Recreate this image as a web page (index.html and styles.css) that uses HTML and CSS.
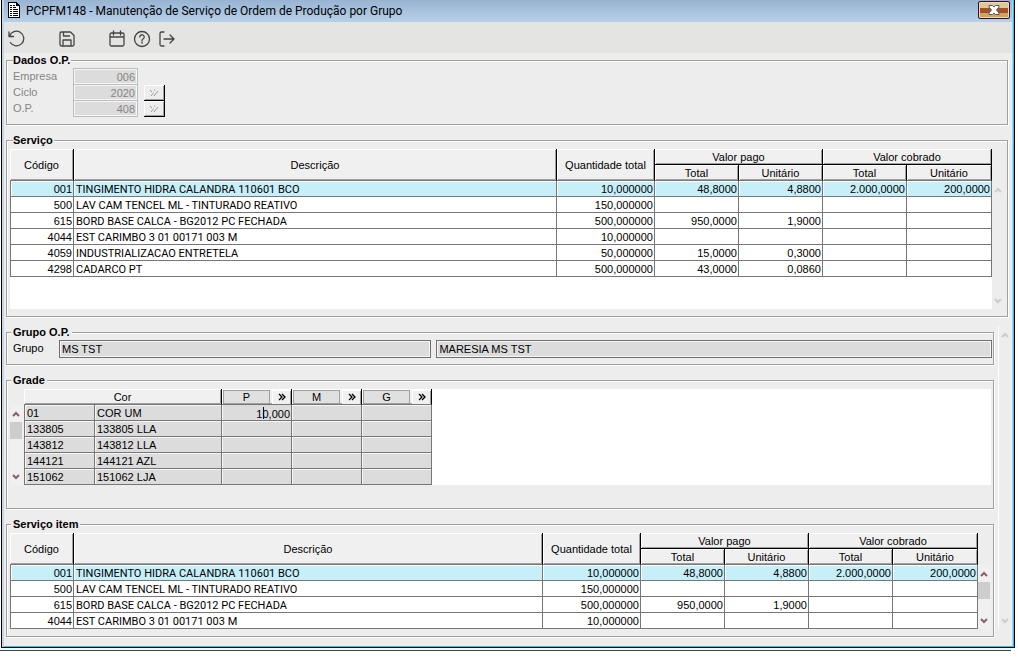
FILE: index.html
```html
<!DOCTYPE html>
<html lang="pt-BR">
<head>
    <meta charset="UTF-8">
    <meta name="viewport" content="width=device-width, initial-scale=1.0">
    <title>PCPFM148 - Manutenção de Serviço de Ordem de Produção por Grupo</title>
    <link rel="stylesheet" href="styles.css">
</head>
<body>
    <div class="window">
        <header class="titlebar">
            <svg class="app-icon" width="12" height="16" viewBox="0 0 12 16" shape-rendering="crispEdges">
                <path d="M0 0h8l4 4v12H0z" fill="#000"/>
                <path d="M1 1h7v3h3v11H1z" fill="#fff"/>
                <path d="M2 3h2v1H2zM5 3h2v1H5zM2 5h2v1H2zM5 5h3v1H5zM2 7h2v1H2zM5 7h5v1H5zM2 9h2v1H2zM5 9h5v1H5zM2 11h2v1H2zM5 11h5v1H5zM2 13h2v1H2zM5 13h5v1H5z" fill="#000"/>
            </svg>
            <h1>PCPFM148 - Manutenção de Serviço de Ordem de Produção por Grupo</h1>
            <button type="button" class="close" aria-label="Fechar">
                <svg width="12" height="10" viewBox="0 0 12 10">
                    <path d="M1 .5h3.500L6 2 7.500.5H11v1.500L8.500 5 11 8v1.500H7.500L6 8 4.500 9.500H1V8l2.500-3L1 2z" fill="#fff" stroke="#4a5672"/>
                </svg>
            </button>
        </header>

        <nav class="toolbar">
            <button type="button" aria-label="Desfazer">
                <svg viewBox="0 0 18 18"><path d="M1 2v4.500h4.500M1.500 6.300A7.300 7.300 0 1 1 2.300 12.500"/></svg>
            </button>
            <button type="button" class="save" aria-label="Salvar">
                <svg viewBox="0 0 18 18"><path d="M3.500 2h9L16 5.500v9a1.500 1.500 0 0 1-1.500 1.500h-11A1.500 1.500 0 0 1 2 14.500v-11A1.500 1.500 0 0 1 3.500 2zM5.500 2v4h6M5 16v-6h8v6"/></svg>
            </button>
            <button type="button" class="calendar" aria-label="Calendário">
                <svg viewBox="0 0 18 18"><path d="M3.500 3h11A1.500 1.500 0 0 1 16 4.500v10a1.500 1.500 0 0 1-1.500 1.500h-11A1.500 1.500 0 0 1 2 14.500v-10A1.500 1.500 0 0 1 3.500 3zM2 7h14M5.500 1v4M12.500 1v4"/></svg>
            </button>
            <button type="button" aria-label="Ajuda">
                <svg viewBox="0 0 18 18"><circle cx="9" cy="9" r="7.500"/><path d="M6.800 7a2.200 2.200 0 1 1 3.400 1.800C9.300 9.300 9 9.600 9 10.500M9 12v1.200"/></svg>
            </button>
            <button type="button" aria-label="Sair">
                <svg viewBox="0 0 18 18"><path d="M6 2H3.500A1.500 1.500 0 0 0 2 3.500v11A1.500 1.500 0 0 0 3.500 16H6M6 9h10M12 5l4 4-4 4"/></svg>
            </button>
        </nav>

        <main>
            <div class="top">
                <fieldset class="order">
                    <legend>Dados O.P.</legend>
                    <label for="empresa">Empresa</label>
                    <input type="text" id="empresa" value="006" disabled>
                    <span></span>
                    <label for="ciclo">Ciclo</label>
                    <input type="text" id="ciclo" value="2020" disabled>
                    <button type="button" class="lookup" aria-label="Buscar ciclo" disabled>
                        <svg width="10" height="8" viewBox="0 0 10 8"><path d="M1 1l2 2M5 1h1M2 7l2-2.500M5 7l4-5M4 4h1"/></svg>
                    </button>
                    <label for="op">O.P.</label>
                    <input type="text" id="op" value="408" disabled>
                    <button type="button" class="lookup" aria-label="Buscar O.P." disabled>
                        <svg width="10" height="8" viewBox="0 0 10 8"><path d="M1 1l2 2M5 1h1M2 7l2-2.500M5 7l4-5M4 4h1"/></svg>
                    </button>
                </fieldset>

                <fieldset>
                    <legend>Serviço</legend>
                    <div class="list list-tall">
                        <div class="sheet">
                            <table class="services">
                                <colgroup><col class="code"><col><col class="qty"><col class="val"><col class="val"><col class="val"><col class="val-last"></colgroup>
                                <thead>
                                    <tr><th rowspan="2">Código</th><th rowspan="2">Descrição</th><th rowspan="2">Quantidade total</th><th colspan="2" class="group">Valor pago</th><th colspan="2" class="group">Valor cobrado</th></tr>
                                    <tr><th>Total</th><th>Unitário</th><th>Total</th><th>Unitário</th></tr>
                                </thead>
                                <tbody>
                                    <tr class="selected"><td>001</td><td>TINGIMENTO HIDRA CALANDRA 110601 BCO</td><td>10,000000</td><td>48,8000</td><td>4,8800</td><td>2.000,0000</td><td>200,0000</td></tr>
                                    <tr><td>500</td><td>LAV CAM TENCEL ML - TINTURADO REATIVO</td><td>150,000000</td><td></td><td></td><td></td><td></td></tr>
                                    <tr><td>615</td><td>BORD BASE CALCA - BG2012 PC FECHADA</td><td>500,000000</td><td>950,0000</td><td>1,9000</td><td></td><td></td></tr>
                                    <tr><td>4044</td><td>EST CARIMBO 3 01 00171 003 M</td><td>10,000000</td><td></td><td></td><td></td><td></td></tr>
                                    <tr><td>4059</td><td>INDUSTRIALIZACAO ENTRETELA</td><td>50,000000</td><td>15,0000</td><td>0,3000</td><td></td><td></td></tr>
                                    <tr><td>4298</td><td>CADARCO PT</td><td>500,000000</td><td>43,0000</td><td>0,0860</td><td></td><td></td></tr>
                                </tbody>
                            </table>
                        </div>
                        <div class="scroll off">
                            <svg viewBox="0 0 8 6"><path d="M1 5l3-3 3 3"/></svg>
                            <svg viewBox="0 0 8 6"><path d="M1 1l3 3 3-3"/></svg>
                        </div>
                    </div>
                </fieldset>
            </div>

            <div class="bottom">
                <div class="panels">
                    <fieldset class="framed group-row">
                        <legend>Grupo O.P.</legend>
                        <div class="fields">
                            <label for="grupo">Grupo</label>
                            <input type="text" id="grupo" value="MS TST" readonly>
                            <input type="text" class="wide" aria-label="Descrição do grupo" value="MARESIA MS TST" readonly>
                        </div>
                    </fieldset>

                    <fieldset class="framed grade">
                        <legend>Grade</legend>
                        <div class="list">
                            <div class="scroll short">
                                <svg viewBox="0 0 8 6"><path d="M1 5l3-3 3 3"/></svg>
                                <span class="thumb"></span>
                                <svg viewBox="0 0 8 6"><path d="M1 1l3 3 3-3"/></svg>
                            </div>
                            <div class="sheet">
                                <table class="sizes">
                                    <colgroup><col class="size"><col class="color"><col class="size"><col class="size"><col class="size"></colgroup>
                                    <thead>
                                        <tr>
                                            <th colspan="2">Cor</th>
                                            <th><div class="size-head"><span>P</span><button type="button" aria-label="Detalhes P"><svg viewBox="0 0 8 8"><path d="M1 1l3 3-3 3M4 1l3 3-3 3"/></svg></button></div></th>
                                            <th><div class="size-head"><span>M</span><button type="button" aria-label="Detalhes M"><svg viewBox="0 0 8 8"><path d="M1 1l3 3-3 3M4 1l3 3-3 3"/></svg></button></div></th>
                                            <th><div class="size-head"><span>G</span><button type="button" aria-label="Detalhes G"><svg viewBox="0 0 8 8"><path d="M1 1l3 3-3 3M4 1l3 3-3 3"/></svg></button></div></th>
                                        </tr>
                                    </thead>
                                    <tbody>
                                        <tr><td>01</td><td>COR UM</td><td class="editing"><input type="text" aria-label="Quantidade P" value="10,000"><i class="caret"></i></td><td></td><td></td></tr>
                                        <tr><td>133805</td><td>133805 LLA</td><td></td><td></td><td></td></tr>
                                        <tr><td>143812</td><td>143812 LLA</td><td></td><td></td><td></td></tr>
                                        <tr><td>144121</td><td>144121 AZL</td><td></td><td></td><td></td></tr>
                                        <tr><td>151062</td><td>151062 LJA</td><td></td><td></td><td></td></tr>
                                    </tbody>
                                </table>
                            </div>
                        </div>
                    </fieldset>

                    <fieldset class="framed">
                        <legend>Serviço item</legend>
                        <div class="list">
                            <div class="sheet">
                                <table class="services">
                                    <colgroup><col class="code"><col><col class="qty"><col class="val"><col class="val"><col class="val"><col class="val-last"></colgroup>
                                    <thead>
                                        <tr><th rowspan="2">Código</th><th rowspan="2">Descrição</th><th rowspan="2">Quantidade total</th><th colspan="2" class="group">Valor pago</th><th colspan="2" class="group">Valor cobrado</th></tr>
                                        <tr><th>Total</th><th>Unitário</th><th>Total</th><th>Unitário</th></tr>
                                    </thead>
                                    <tbody>
                                        <tr class="selected"><td>001</td><td>TINGIMENTO HIDRA CALANDRA 110601 BCO</td><td>10,000000</td><td>48,8000</td><td>4,8800</td><td>2.000,0000</td><td>200,0000</td></tr>
                                        <tr><td>500</td><td>LAV CAM TENCEL ML - TINTURADO REATIVO</td><td>150,000000</td><td></td><td></td><td></td><td></td></tr>
                                        <tr><td>615</td><td>BORD BASE CALCA - BG2012 PC FECHADA</td><td>500,000000</td><td>950,0000</td><td>1,9000</td><td></td><td></td></tr>
                                        <tr><td>4044</td><td>EST CARIMBO 3 01 00171 003 M</td><td>10,000000</td><td></td><td></td><td></td><td></td></tr>
                                    </tbody>
                                </table>
                            </div>
                            <div class="scroll">
                                <svg viewBox="0 0 8 6"><path d="M1 5l3-3 3 3"/></svg>
                                <span class="thumb"></span>
                                <svg viewBox="0 0 8 6"><path d="M1 1l3 3 3-3"/></svg>
                            </div>
                        </div>
                    </fieldset>
                </div>
                <div class="scroll page-scroll off">
                    <svg viewBox="0 0 8 6"><path d="M1 5l3-3 3 3"/></svg>
                    <svg viewBox="0 0 8 6"><path d="M1 1l3 3 3-3"/></svg>
                </div>
            </div>
        </main>
    </div>
    <div class="back-edge"></div>
</body>
</html>
```
FILE: styles.css
```css
* {
    box-sizing: border-box;
}
body {
    margin: 0;
    background: #fff;
    color: #000;
    font-family: "Liberation Sans", Arial, sans-serif;
    font-size: 11px;
    line-height: 13px;
}
button, input {
    font: inherit;
    color: inherit;
    margin: 0;
    padding: 0;
    border-radius: 0;
}
svg {
    display: block;
    fill: none;
}

/* Window frame */
.window {
    margin: 0 3px 0 1px;
    border: 1px solid #000;
    border-top: 0;
    background: #ededed;
    box-shadow: inset 2px 0 0 #c3d5e6, inset -1px -1px 0 #28c4ec, inset -2px 0 0 #b4cfea;
    padding: 0 2px 1px;
}
.back-edge {
    height: 3px;
    margin-right: 7px;
    border-bottom: 1px solid #444;
    background: #eef8fc;
}
.titlebar {
    display: flex;
    align-items: center;
    height: 22px;
    padding: 0 2px 0 4px;
    background: linear-gradient(#98b4d2, #b8d1ea);
}
.titlebar h1 {
    flex: 1;
    margin: 0 0 0 6px;
    font: 12px/16px Roboto, "Noto Sans", sans-serif;
}
.app-icon {
    margin-bottom: 2px;
}
.close {
    display: flex;
    align-items: center;
    justify-content: center;
    width: 32px;
    height: 18px;
    margin-bottom: 2px;
    border: 1px solid #3c0a32;
    border-radius: 2px;
    background: linear-gradient(#e0c994 0 40%, #a5502a 40% 70%, #cfa55c 70%);
    box-shadow: inset 0 0 0 1px #ecd9b0;
}
.toolbar {
    display: flex;
    align-items: center;
    gap: 7px;
    height: 31px;
    padding: 3px 0 0 4px;
    background: #e4e4e2;
}
.toolbar button {
    width: 18px;
    height: 18px;
    border: 0;
    background: none;
}
.toolbar .save {
    margin-left: 25px;
}
.toolbar .calendar {
    margin-left: 25px;
}
.toolbar svg {
    stroke: #444;
    stroke-width: 1.3;
    stroke-linecap: round;
    stroke-linejoin: round;
}

/* Group boxes */
main {
    display: flex;
    flex-direction: column;
    gap: 9px;
    padding: 1px 0 9px 2px;
}
.top, .panels {
    display: flex;
    flex-direction: column;
    gap: 9px;
    min-width: 0;
}
.top {
    padding-right: 4px;
}
.bottom {
    display: flex;
    gap: 4px;
}
.panels {
    flex: 1;
}
fieldset {
    min-width: 0;
    margin: 0;
    padding: 2px 2px 7px 3px;
    border: 1px solid #a0a0a0;
    box-shadow: 1px 1px 0 #fff, inset 1px 1px 0 #fff;
}
legend {
    margin-left: 3px;
    padding: 0 1px 0 0;
    font-weight: bold;
    background: #ededed;
}
.framed legend {
    margin-left: 1px;
    padding: 0 2px;
}
.order {
    display: grid;
    grid-template-columns: 60px 65px 22px;
    grid-auto-rows: 16px;
    padding: 1px 6px 8px;
    color: #858585;
}
.order legend {
    margin-left: 0;
    color: #000;
}
.order label {
    padding-top: 2px;
}
.order input {
    height: 17px;
    width: 65px;
    padding: 1px 2px 0;
    border: 1px solid #bdbdbd;
    background: #dcdcdc;
    box-shadow: inset 0 0 0 1px #f6f6f6;
    text-align: right;
}
.lookup {
    display: flex;
    align-items: center;
    justify-content: center;
    width: 21px;
    height: 16px;
    margin: 1px 0 0 6px;
    border: solid #000;
    border-width: 0 1px 1px 0;
    background: #ededed;
    box-shadow: inset 1px 1px 0 #fff, inset -1px -1px 0 #a0a0a0;
}
.lookup svg {
    stroke: #999;
}
.fields {
    display: flex;
    gap: 5px;
}
.group-row {
    padding: 1px 1px 6px 3px;
}
.fields label {
    width: 44px;
    padding-left: 3px;
    line-height: 16px;
}
.fields input {
    flex: 2;
    min-width: 0;
    height: 18px;
    padding: 0 2px;
    border: 1px solid #707070;
    background: #dcdcdc;
    box-shadow: inset 0 0 0 1px #f6f6f6;
}
.fields .wide {
    flex: 3;
}
.grade {
    padding-bottom: 23px;
}

/* Tables */
.list {
    display: flex;
}
.list-tall {
    min-height: 160px;
}
.sheet {
    flex: 1;
    min-width: 0;
    background: #fff;
}
table {
    table-layout: fixed;
    border-collapse: separate;
    border-spacing: 0;
}
.services {
    width: 100%;
}
.code {
    width: 64px;
}
.qty {
    width: 98px;
}
.val {
    width: 84px;
}
.val-last {
    width: 85px;
}
th, td {
    height: 16px;
    border: solid #777;
    border-width: 0 1px 1px 0;
    white-space: nowrap;
    overflow: hidden;
}
th {
    padding: 1px 0 0;
    line-height: 14px;
    font-weight: normal;
    background: #f0f0f0;
    border-right-color: #000;
    box-shadow: inset 1px 1px 0 #fff, inset -1px -1px 0 #a0a0a0;
}
td {
    padding: 2px 1px 0 2px;
    line-height: 13px;
}
.group {
    border-bottom-color: #000;
}
td:first-child {
    border-left-width: 1px;
}
.services td {
    text-align: right;
}
.services td:nth-child(2) {
    font-family: Roboto, "Liberation Sans", sans-serif;
    text-align: left;
}
.selected td {
    background: #c6effa;
    box-shadow: inset 1px 1px 0 #fff;
}
.sizes {
    width: 408px;
}
.size {
    width: 70px;
}
.sizes .size:first-child {
    width: 71px;
}
.color {
    width: 127px;
}
.sizes td {
    background: #dcdcdc;
    box-shadow: inset 1px 1px 0 #f6f6f6;
}
.sizes th {
    padding: 0;
}
.size-head {
    display: flex;
    gap: 2px;
    height: 15px;
    padding: 1px 0 0 1px;
}
.size-head span {
    flex: 1;
    line-height: 13px;
    border: 1px solid #a0a0a0;
    background: #e0e0e0;
}
.size-head button {
    display: flex;
    align-items: center;
    justify-content: center;
    width: 19px;
    border: 0;
    background: #f0f0f0;
    box-shadow: inset 1px 1px 0 #fff, inset -1px 0 0 #a0a0a0;
}
.size-head svg {
    width: 8px;
    stroke: #000;
    stroke-width: 1.3;
}
.sizes .editing {
    position: relative;
    padding: 0;
    box-shadow: inset 1px 0 0 #f6f6f6;
}
.editing input {
    display: block;
    width: 100%;
    height: 15px;
    padding: 2px 1px 0;
    border: 0;
    background: none;
    text-align: right;
}
.caret {
    position: absolute;
    top: 2px;
    right: 27px;
    width: 1px;
    height: 12px;
    background: #000060;
}

/* Scroll bars */
.scroll {
    display: flex;
    flex-direction: column;
    justify-content: space-between;
    align-items: center;
    width: 13px;
    margin-top: 32px;
    padding: 6px 2px 5px 0;
    background: #f0f0f0;
}
.scroll svg {
    width: 8px;
    height: 6px;
    stroke: #87606f;
    stroke-width: 2;
}
.scroll.off {
    background: none;
}
.scroll.off svg {
    stroke: #ccc;
}
.thumb {
    width: 12px;
    height: 17px;
    margin: 5px 0 auto;
    background: #cdcdcd;
}
.short {
    width: 14px;
    margin-top: 16px;
}
.page-scroll {
    width: 14px;
    margin: 0 0 8px;
    border-left: 1px solid #fff;
}
```
